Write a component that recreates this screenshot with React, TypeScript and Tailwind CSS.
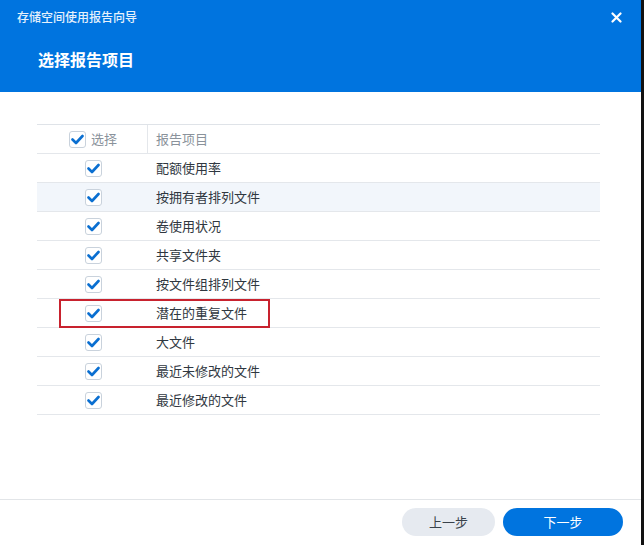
import React from "react";

const items = [
  "配额使用率",
  "按拥有者排列文件",
  "卷使用状况",
  "共享文件夹",
  "按文件组排列文件",
  "潜在的重复文件",
  "大文件",
  "最近未修改的文件",
  "最近修改的文件",
];

function Check() {
  return (
    <div className="w-[17px] h-[17px] rounded-[3px] border border-[#c9d2dc] bg-white flex items-center justify-center">
      <svg width="13" height="11" viewBox="0 0 13 11">
        <path d="M1.5 5.5 L5 9 L11.5 2" fill="none" stroke="#0a6fd1" strokeWidth="2.6" strokeLinecap="round" strokeLinejoin="round" />
      </svg>
    </div>
  );
}

export default function App() {
  return (
    <div className="w-[644px] h-[545px] bg-[#111] flex" style={{ fontFamily: '"Noto Sans CJK SC", "Noto Sans", sans-serif' }}>
      <div className="w-[641px] h-[545px] bg-white flex flex-col">
        <div className="h-[92px] bg-[#0074df] flex flex-col">
          <div className="h-[34px] flex items-center justify-between pl-[17px] pr-[19px]">
            <span className="text-[12px] text-white/90 font-medium">存储空间使用报告向导</span>
            <svg width="11" height="11" viewBox="0 0 11 11">
              <path d="M1.5 1.5 L9.5 9.5 M9.5 1.5 L1.5 9.5" stroke="white" strokeWidth="2.2" strokeLinecap="round" />
            </svg>
          </div>
          <div className="pl-[38px] mt-[15px] text-[16px] font-bold text-white leading-[20px]">选择报告项目</div>
        </div>
        <div className="flex-1 pt-[32px] pl-[37px] pr-[41px]">
          <div className="border-t border-[#dfe3e8]">
            <div className="h-[29px] flex items-center border-b border-[#e4e7eb]">
              <div className="w-[111px] h-full flex items-center pl-[32px] gap-[5px] border-r border-[#e4e7eb]">
                <Check />
                <span className="text-[13px] text-[#8a929b]">选择</span>
              </div>
              <span className="pl-[8px] text-[13px] text-[#8a929b]">报告项目</span>
            </div>
            {items.map((t, i) => (
              <div
                key={t}
                className={`relative h-[29px] flex items-center border-b border-[#e4e7eb] ${i === 1 ? "bg-[#f2f6fb]" : ""}`}
              >
                <div className="w-[111px] flex justify-center pl-[1px]">
                  <Check />
                </div>
                <span className="pl-[8px] text-[13px] text-[#2f3740]">{t}</span>
                {i === 5 && (
                  <div className="absolute left-[22px] top-[0px] w-[211px] h-[29px] border-2 border-[#c8222e] pointer-events-none" />
                )}
              </div>
            ))}
          </div>
        </div>
        <div className="h-[46px] border-t border-[#e2e5e8] flex items-center justify-end gap-[8px] pr-[18px] pb-[2px]">
          <button className="w-[93px] h-[28px] rounded-full bg-[#e6eaf0] text-[13px] text-[#38414a]">上一步</button>
          <button className="w-[120px] h-[28px] rounded-full bg-[#0074df] text-[13px] text-white">下一步</button>
        </div>
      </div>
    </div>
  );
}
